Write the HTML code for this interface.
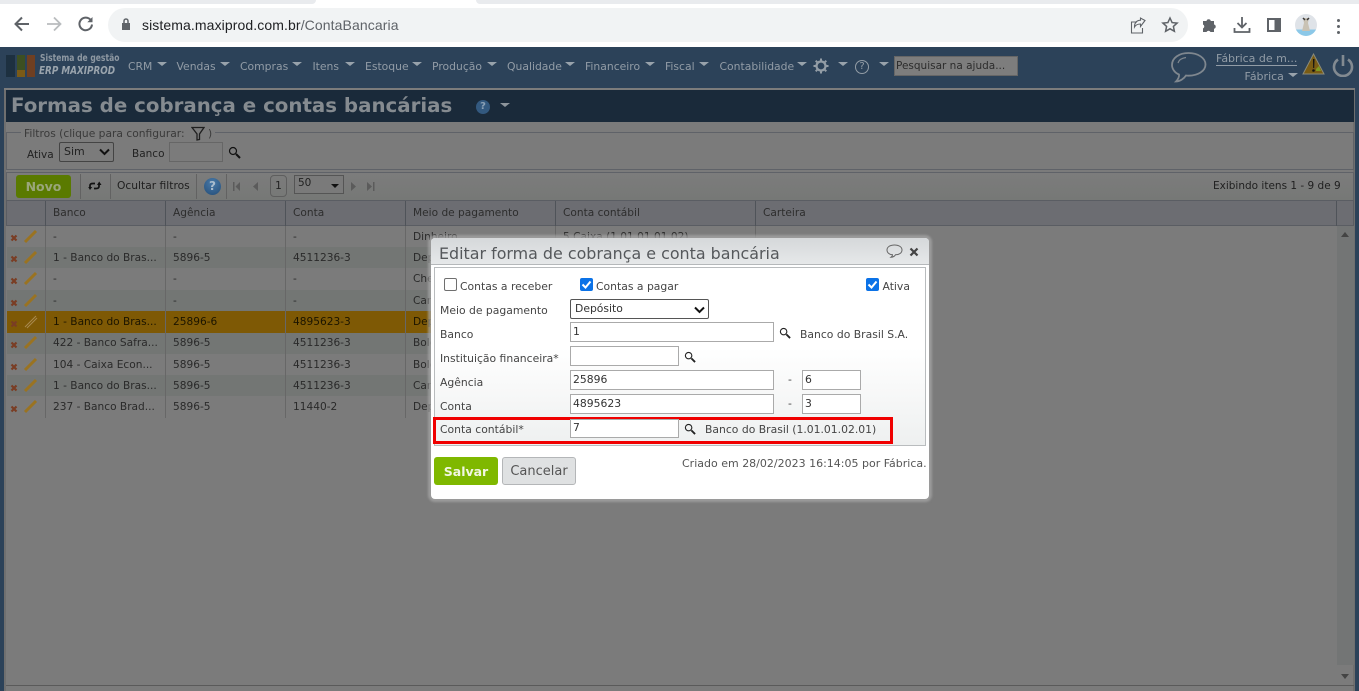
<!DOCTYPE html>
<html><head><meta charset="utf-8">
<style>
html,body{margin:0;padding:0;width:1359px;height:691px;overflow:hidden;background:#2c4259}
*{box-sizing:border-box}
body{font-family:"DejaVu Sans","Liberation Sans",sans-serif;font-size:11px;color:#222;position:relative}
.a{position:absolute;white-space:nowrap}
.m{color:#929ca6;font-size:10.800px;top:60px;line-height:13px}
.tri{position:absolute;width:0;height:0;border-left:5px solid transparent;border-right:5px solid transparent;border-top:4px solid #98a2ab}
.h{position:absolute;top:201px;height:25px;line-height:25px;color:#2d2d2d;font-size:10.600px;padding-left:7px;border-left:1px solid #4f5359}
.c{position:absolute;font-size:10.600px;color:#2a2a2a;line-height:14px;white-space:nowrap}
.vl{position:absolute;width:1px;background:#676767;top:226px;height:192px}
.row{position:absolute;left:7px;width:424px;height:21px}
.d{position:absolute;color:#444;font-size:10.800px;line-height:14px;white-space:nowrap;margin-top:1px}
.inp{position:absolute;height:20px;border:1px solid #aaa;background:#fff;color:#333;font-size:10.800px;line-height:17px;padding-left:2px}
.cb{position:absolute;width:13px;height:13px;border-radius:2px;background:#0b72e7}
.cb svg{position:absolute;left:0;top:0}
</style></head><body>

<!-- Browser chrome -->
<div class="a" style="left:0;top:0;width:1359px;height:47px;background:#fff"></div>
<div class="a" style="left:0;top:0;width:316px;height:4px;background:#e9ebee;border-radius:0 0 6px 0"></div>
<div class="a" style="left:476px;top:0;width:883px;height:4px;background:#e9ebee;border-radius:0 0 0 6px"></div>
<svg class="a" style="left:12px;top:14px" width="20" height="20" viewBox="0 0 20 20" fill="none" stroke="#5f6368" stroke-width="2"><path d="M17 10H4M10 3.500 3.500 10l6.500 6.500"/></svg>
<svg class="a" style="left:44px;top:14px" width="20" height="20" viewBox="0 0 20 20" fill="none" stroke="#b9bcbf" stroke-width="1.800"><path d="M3 10h13M10 3.500 16.500 10 10 16.500"/></svg>
<svg class="a" style="left:76px;top:14px" width="20" height="20" viewBox="0 0 20 20" fill="none" stroke="#5f6368" stroke-width="2"><path d="M16 10.500A6.300 6.300 0 1 1 14.300 5.600"/><path d="M16.500 3v5.200h-5.200z" fill="#5f6368" stroke="none"/></svg>
<div class="a" style="left:108px;top:8px;width:1080px;height:34px;background:#f1f3f4;border-radius:17px"></div>
<svg class="a" style="left:121px;top:17px" width="10" height="14" viewBox="0 0 10 14"><path d="M1 6h8v7H1z" fill="#5f6368"/><path d="M3 6V4a2 2 0 0 1 4 0v2" fill="none" stroke="#5f6368" stroke-width="1.500"/></svg>
<div class="a" style="left:142px;top:17px;font-size:14px;line-height:17px;color:#202124;letter-spacing:.1px;font-family:'Liberation Sans',sans-serif">sistema.maxiprod.com.br<span style="color:#5f6368">/ContaBancaria</span></div>
<svg class="a" style="left:1130px;top:17px" width="18" height="18" viewBox="0 0 18 18" fill="none" stroke="#5f6368" stroke-width="1.100"><path d="M15 3.500 10.500 1v2.200C6 3.500 4.500 6.500 4.500 10c1.500-2.500 3.500-3 6-3v2.500z"/><path d="M7 5H1.500v11h11v-5"/></svg>
<svg class="a" style="left:1161px;top:16px" width="18" height="18" viewBox="0 0 18 18" fill="none" stroke="#5f6368" stroke-width="1.500"><path d="m9 2 2.100 4.600 5 .5-3.700 3.300 1 4.900L9 12.800l-4.400 2.500 1-4.900L1.900 7.100l5-.5z"/></svg>
<svg class="a" style="left:1202px;top:16px" width="16" height="17" viewBox="0 0 16 17"><path d="M1 5h3.500a2.200 2.200 0 0 1 4.300 0H12v3.500a2.200 2.200 0 0 1 0 4.300V16H8.500a2.200 2.200 0 0 0-4 0H1v-3.500a2.200 2.200 0 0 0 0-4z" fill="#5f6368"/></svg>
<svg class="a" style="left:1233px;top:16px" width="18" height="18" viewBox="0 0 18 18" fill="none" stroke="#5f6368" stroke-width="1.800"><path d="M9 1v10M4.500 7 9 11.500 13.500 7M1.500 12v4h15v-4"/></svg>
<div class="a" style="left:1267px;top:18px;width:14px;height:14px;border:2px solid #5f6368;background:linear-gradient(90deg,#fff 0 55%,#5f6368 55%)"></div>
<div class="a" style="left:1295px;top:14px;width:22px;height:22px;border-radius:50%;background:linear-gradient(#dfe3e8 0 70%,#8cc8e8 70%)"></div>
<svg class="a" style="left:1298px;top:15px" width="16" height="19" viewBox="0 0 16 19"><path d="M5 3h6l-1 5 2 8H4l2-8z" fill="#c9c2b4"/><path d="M5 3l2 2M11 3 9 5" stroke="#3a3a3a" stroke-width="1.500"/></svg>
<div class="a" style="left:1337px;top:19px;width:3px;height:3px;border-radius:50%;background:#5f6368;box-shadow:0 6px 0 #5f6368,0 12px 0 #5f6368"></div>

<!-- App header -->
<div class="a" style="left:0;top:47px;width:1359px;height:644px;background:#2c4259"></div>
<div class="a" style="left:6px;top:55px;width:9px;height:22px;background:#1d3040"></div>
<div class="a" style="left:17px;top:55px;width:8px;height:15px;background:#3d4f22"></div>
<div class="a" style="left:17px;top:70px;width:8px;height:7px;background:#7a5a17"></div>
<div class="a" style="left:27px;top:55px;width:8px;height:22px;background:#6f3f22"></div>
<div class="a" style="left:40px;top:53px;color:#8e98a2;font-size:9.500px;line-height:12px;font-weight:bold;transform:scaleX(.8);transform-origin:0 0">Sistema de gestão</div>
<div class="a" style="left:39px;top:65px;color:#9aa4ad;font-size:10.500px;line-height:12px;font-weight:bold;font-style:italic;transform:scaleX(.84);transform-origin:0 0">ERP MAXIPROD</div>

<div class="a m" style="left:128px">CRM</div><div class="tri" style="left:157px;top:62px"></div>
<div class="a m" style="left:176.500px">Vendas</div><div class="tri" style="left:220px;top:62px"></div>
<div class="a m" style="left:240px">Compras</div><div class="tri" style="left:292px;top:62px"></div>
<div class="a m" style="left:312.500px">Itens</div><div class="tri" style="left:345px;top:62px"></div>
<div class="a m" style="left:365px">Estoque</div><div class="tri" style="left:412px;top:62px"></div>
<div class="a m" style="left:432px">Produção</div><div class="tri" style="left:487px;top:62px"></div>
<div class="a m" style="left:507px">Qualidade</div><div class="tri" style="left:565px;top:62px"></div>
<div class="a m" style="left:585px">Financeiro</div><div class="tri" style="left:645px;top:62px"></div>
<div class="a m" style="left:665px">Fiscal</div><div class="tri" style="left:699px;top:62px"></div>
<div class="a m" style="left:719.500px">Contabilidade</div><div class="tri" style="left:797px;top:62px"></div>
<svg class="a" style="left:813px;top:58px" width="16" height="16" viewBox="0 0 16 16"><circle cx="8" cy="8" r="4.500" fill="none" stroke="#939da6" stroke-width="2.200"/><path d="M8 .5v3M8 12.500v3M.5 8h3M12.500 8h3M2.700 2.700l2.100 2.100M11.200 11.200l2.100 2.100M13.300 2.700l-2.100 2.100M4.800 11.200l-2.100 2.100" stroke="#939da6" stroke-width="2"/></svg>
<div class="tri" style="left:838px;top:62px"></div>
<div class="a" style="left:855px;top:60px;width:14px;height:14px;border:1.500px solid #939da6;border-radius:50%;color:#939da6;font-size:10px;line-height:11px;text-align:center">?</div>
<div class="tri" style="left:879px;top:62px"></div>
<div class="a" style="left:894px;top:56px;width:124px;height:20px;background:#7d7d7d;border:1px solid #666;color:#2c2c2c;font-size:10.500px;line-height:18px;padding-left:1px;overflow:hidden">Pesquisar na ajuda...</div>
<svg class="a" style="left:1170px;top:51px" width="37" height="33" viewBox="0 0 37 33" fill="none" stroke="#7f878f" stroke-width="1.800"><path d="M18.500 2C9 2 2 7 2 14c0 4 3 8 7 9.500.5 2-1 5-3 7 4 0 8-3 10-6 1 .2 1.500.2 2.500.2C28 24.700 35.500 20 35.500 13.500 35.500 7 28 2 18.500 2z"/><path d="M8 12c1-3 4-5 8-5.500" stroke-width="1.200"/></svg>
<div class="a" style="left:1216px;top:52px;color:#929ca6;font-size:11px;line-height:14px;border-bottom:1px solid #929ca6;height:14px;width:81px;overflow:visible">Fábrica de m...</div>
<div class="a" style="left:1244.500px;top:70px;color:#929ca6;font-size:11px;line-height:14px">Fábrica</div>
<div class="tri" style="left:1288px;top:73px"></div>
<svg class="a" style="left:1302px;top:53px" width="23" height="22" viewBox="0 0 23 22"><path d="M11.500 1 22 21H1z" fill="#7a5c14" stroke="#8b8b7a"/><path d="M11 6h1.500l-.3 9h-1z" fill="#111"/><circle cx="11.500" cy="17.500" r="1.300" fill="#111"/><path d="M14 16l3-3 2 5h-5z" fill="#7f9a22"/></svg>
<svg class="a" style="left:1332px;top:54px" width="22" height="23" viewBox="0 0 22 23" fill="none" stroke="#828a91" stroke-width="2.600"><path d="M11 1v11"/><path d="M6 5.500a9 9 0 1 0 10 0"/></svg>

<!-- Title bar -->
<div class="a" style="left:4px;top:88px;width:1351px;height:603px;background:#7b7b7b;border:2px solid #6f6f6f;border-bottom:0"></div>
<div class="a" style="left:4px;top:88px;width:1351px;height:2px;background:#7c7c7c"></div>
<div class="a" style="left:6px;top:90px;width:1348px;height:32px;background:#1a2a3a"></div>
<div class="a" style="left:11px;top:94px;font-size:19.800px;line-height:24px;font-weight:bold;color:#858b90">Formas de cobrança e contas bancárias</div>
<div class="a" style="left:476px;top:100px;width:14px;height:14px;border-radius:50%;background:#33597f;color:#8aa0b5;font-size:10px;line-height:14px;text-align:center;font-weight:bold">?</div>
<div class="tri" style="left:500px;top:103px;border-top-color:#8d959c"></div>

<!-- Filter -->
<div class="a" style="left:6px;top:132px;width:1348px;height:38px;border:1px solid #5f6268"></div>
<div class="a" style="left:21px;top:127px;background:#7b7b7b;padding:0 3px;color:#3a3a3a;font-size:10.700px;line-height:13px;width:194px">Filtros (clique para configurar:<span style="position:absolute;left:187px;top:0">)</span></div>
<svg class="a" style="left:191px;top:126px" width="14" height="15" viewBox="0 0 14 15" fill="none" stroke="#1f1f1f" stroke-width="1.300"><path d="M1 1.500h12L8.500 8v5.500L6 14V8z"/></svg>
<div class="a" style="left:27px;top:148px;color:#222;font-size:10.500px;line-height:14px">Ativa</div>
<div class="a" style="left:59px;top:142px;width:55px;height:20px;border:1px solid #444;border-radius:2px;color:#222;font-size:11px;line-height:18px;padding-left:4px;background:#7b7b7b">Sim</div>
<svg class="a" style="left:99px;top:148px" width="11" height="8" viewBox="0 0 11 8" fill="none" stroke="#111" stroke-width="2"><path d="m1 1.500 4.500 4.500L10 1.500"/></svg>
<div class="a" style="left:132px;top:147px;color:#222;font-size:10.500px;line-height:14px">Banco</div>
<div class="a" style="left:169px;top:142px;width:54px;height:20px;border:1px solid #666;background:#7b7b7b"></div>
<svg class="a" style="left:228px;top:146px" width="13" height="13" viewBox="0 0 13 13" fill="none" stroke="#111"><circle cx="5" cy="5" r="3.500" stroke-width="1.200"/><path d="m8 8 4 4" stroke-width="2"/></svg>

<!-- Toolbar -->
<div class="a" style="left:6px;top:172px;width:1348px;height:29px;border:1px solid #5f6268;background:linear-gradient(#7c7c7c,#767876)"></div>
<div class="a" style="left:16px;top:175px;width:55px;height:23px;background:#5a7a00;border-radius:3px;color:#9aa67a;font-size:12.500px;font-weight:bold;line-height:24px;text-align:center">Novo</div>
<div class="a" style="left:80px;top:174px;width:1px;height:25px;background:#626262"></div>
<svg class="a" style="left:88px;top:179px" width="15" height="14" viewBox="0 0 15 14" fill="none" stroke="#111" stroke-width="1.700"><path d="M2 9V6.500C2 5 3 4.500 5 4.500h2M11 5v2.500C11 9 10 9.500 8 9.500H6"/><path d="M.2 8h4L2 11zM9 6h4.500L11.200 2.500z" fill="#111" stroke="none"/></svg>
<div class="a" style="left:110px;top:174px;width:1px;height:25px;background:#626262"></div>
<div class="a" style="left:117px;top:179px;color:#1f1f1f;font-size:10.700px;line-height:14px">Ocultar filtros</div>
<div class="a" style="left:196px;top:174px;width:1px;height:25px;background:#626262"></div>
<div class="a" style="left:204px;top:178px;width:17px;height:17px;border-radius:50%;background:radial-gradient(circle at 50% 30%,#4a7aa8,#234d78);color:#a9bccd;font-size:12px;font-weight:bold;line-height:17px;text-align:center">?</div>
<div class="a" style="left:226px;top:174px;width:1px;height:25px;background:#626262"></div>
<svg class="a" style="left:232px;top:181px" width="30" height="11" viewBox="0 0 30 11" fill="#5b5b5b"><path d="M1 1h1.500v9H1zM8 1v9L3.500 5.500zM26 1v9l-5-4.500z"/></svg>
<svg class="a" style="left:350px;top:181px" width="28" height="11" viewBox="0 0 28 11" fill="#5b5b5b"><path d="M1 1v9l5-4.500zM17 1v9l5-4.500zM23 1h1.500v9H23z"/></svg>
<div class="a" style="left:270px;top:175px;width:17px;height:22px;border:1px solid #5e5e5e;border-radius:4px;color:#222;font-size:10.500px;line-height:20px;text-align:center">1</div>
<div class="a" style="left:294px;top:175px;width:50px;height:19px;border:1px solid #555;background:#7a7a7a;color:#222;font-size:10.500px;line-height:15px;padding-left:3px">50</div>
<div class="a" style="left:331px;top:184px;border-left:4px solid transparent;border-right:4px solid transparent;border-top:4px solid #111"></div>
<div class="a" style="left:1213px;top:179px;color:#1f1f1f;font-size:10.500px;line-height:14px">Exibindo itens 1 - 9 de 9</div>

<!-- Grid -->
<div class="a" style="left:6px;top:200px;width:1348px;height:26px;background:#6c6d72;border:1px solid #5a5d63"></div>
<div class="h" style="left:45px;width:120px">Banco</div>
<div class="h" style="left:165px;width:120px">Agência</div>
<div class="h" style="left:285px;width:120px">Conta</div>
<div class="h" style="left:405px;width:150px">Meio de pagamento</div>
<div class="h" style="left:555px;width:200px">Conta contábil</div>
<div class="h" style="left:755px;width:582px">Carteira</div>
<div class="h" style="left:1336px;width:18px"></div>

<div class="row" style="top:247px;background:#737674"></div>
<div class="row" style="top:290px;background:#737674"></div>
<div class="row" style="top:311px;height:22px;background:#7e5905"></div>
<div class="row" style="top:333px;background:#737674"></div>
<div class="row" style="top:375px;background:#737674"></div>
<div class="a" style="left:1337px;top:226px;width:17px;height:439px;background:#737575"></div>
<div class="a" style="left:1341px;top:232px;border-left:4px solid transparent;border-right:4px solid transparent;border-bottom:5px solid #444"></div>
<div class="a" style="left:1341px;top:674px;border-left:4px solid transparent;border-right:4px solid transparent;border-top:5px solid #444"></div>
<div class="a" style="left:6px;top:685px;width:1348px;height:1px;background:#5a5a5a"></div>
<div class="vl" style="left:45px"></div><div class="vl" style="left:165px"></div><div class="vl" style="left:285px"></div><div class="vl" style="left:405px"></div><div class="vl" style="left:555px;height:12px"></div><div class="vl" style="left:755px;height:12px"></div>

<svg class="a" style="left:8px;top:228px" width="32" height="190" viewBox="0 0 32 190" fill="none">
<g stroke="#7a3d24" stroke-width="2.200">
<path d="M3.500 7.500l5 5M8.500 7.500l-5 5"/><path d="M3.500 28.500l5 5M8.500 28.500l-5 5"/><path d="M3.500 50.500l5 5M8.500 50.500l-5 5"/><path d="M3.500 72.500l5 5M8.500 72.500l-5 5"/><path d="M3.500 93.500l5 5M8.500 93.500l-5 5"/><path d="M3.500 114.500l5 5M8.500 114.500l-5 5"/><path d="M3.500 136.500l5 5M8.500 136.500l-5 5"/><path d="M3.500 157.500l5 5M8.500 157.500l-5 5"/><path d="M3.500 178.500l5 5M8.500 178.500l-5 5"/>
</g>
<g stroke="#9a7321" stroke-width="3">
<path d="M17 14 28 3"/><path d="M17 35 28 24"/><path d="M17 56 28 45"/><path d="M17 78 28 67"/><path d="M17 120 28 109"/><path d="M17 142 28 131"/><path d="M17 163 28 152"/><path d="M17 184 28 173"/>
</g>
<path d="M17 99 28 88M19 100 29 90" stroke="#a88a50" stroke-width="1"/>
</svg>

<div class="c" style="left:53px;top:230px">-</div><div class="c" style="left:173px;top:230px">-</div><div class="c" style="left:293px;top:230px">-</div><div class="c" style="left:413px;top:230px">Dinheiro</div><div class="c" style="left:563px;top:230px">5 Caixa (1.01.01.01.02)</div>
<div class="c" style="left:53px;top:251px">1 - Banco do Bras...</div><div class="c" style="left:173px;top:251px">5896-5</div><div class="c" style="left:293px;top:251px">4511236-3</div><div class="c" style="left:413px;top:251px">Depósito</div>
<div class="c" style="left:53px;top:272px">-</div><div class="c" style="left:173px;top:272px">-</div><div class="c" style="left:293px;top:272px">-</div><div class="c" style="left:413px;top:272px">Cheque</div>
<div class="c" style="left:53px;top:294px">-</div><div class="c" style="left:173px;top:294px">-</div><div class="c" style="left:293px;top:294px">-</div><div class="c" style="left:413px;top:294px">Cartão</div>
<div class="c" style="left:53px;top:315px;color:#1c1500">1 - Banco do Bras...</div><div class="c" style="left:173px;top:315px;color:#1c1500">25896-6</div><div class="c" style="left:293px;top:315px;color:#1c1500">4895623-3</div><div class="c" style="left:413px;top:315px;color:#1c1500">Depósito</div>
<div class="c" style="left:53px;top:336px">422 - Banco Safra...</div><div class="c" style="left:173px;top:336px">5896-5</div><div class="c" style="left:293px;top:336px">4511236-3</div><div class="c" style="left:413px;top:336px">Boleto</div>
<div class="c" style="left:53px;top:358px">104 - Caixa Econ...</div><div class="c" style="left:173px;top:358px">5896-5</div><div class="c" style="left:293px;top:358px">4511236-3</div><div class="c" style="left:413px;top:358px">Boleto</div>
<div class="c" style="left:53px;top:379px">1 - Banco do Bras...</div><div class="c" style="left:173px;top:379px">5896-5</div><div class="c" style="left:293px;top:379px">4511236-3</div><div class="c" style="left:413px;top:379px">Cartão</div>
<div class="c" style="left:53px;top:400px">237 - Banco Brad...</div><div class="c" style="left:173px;top:400px">5896-5</div><div class="c" style="left:293px;top:400px">11440-2</div><div class="c" style="left:413px;top:400px">Depósito</div>

<!-- Dialog -->
<div class="a" style="left:431px;top:238px;width:498px;height:261px;background:#fff;border-radius:4px;box-shadow:0 0 2px 3px rgba(165,165,165,.75)">
  <div class="a" style="left:0;top:0;width:498px;height:26px;background:linear-gradient(#d5d8da,#e6e8e9);border-radius:4px 4px 0 0"></div>
  <div class="a" style="left:0;top:26px;width:498px;height:1px;background:#b5b8ba"></div>
  <div class="a" style="left:8px;top:5px;font-size:15.900px;line-height:21px;color:#55585b">Editar forma de cobrança e conta bancária</div>
  <svg class="a" style="left:455px;top:6px" width="17" height="14" viewBox="0 0 17 14" fill="none" stroke="#666" stroke-width="1"><path d="M8.500 1C4 1 1 3 1 6s3 4.800 5.500 4.800c0 1-.5 1.700-1.500 2.400 2 0 3.500-1 4.500-2.400C13 10.800 16 9 16 6s-3-5-7.500-5z"/></svg>
  <svg class="a" style="left:478px;top:9px" width="10" height="10" viewBox="0 0 10 10" stroke="#444" stroke-width="2.200"><path d="m1.500 1.500 7 7M8.500 1.500l-7 7"/></svg>
  <div class="a" style="left:3px;top:29px;width:492px;height:179px;border:1px solid #b9bcbe;background:linear-gradient(#fff 0,#fff 45%,#eef0f0 100%)"></div>
</div>

<div class="a" style="left:444px;top:278px;width:13px;height:13px;border:1px solid #6f6f6f;border-radius:2px;background:#fff"></div>
<div class="d" style="left:460px;top:279px">Contas a receber</div>
<div class="cb" style="left:580px;top:278px"><svg width="13" height="13" viewBox="0 0 13 13" fill="none" stroke="#fff" stroke-width="2"><path d="m2.500 6.500 3 3 5-6"/></svg></div>
<div class="d" style="left:596px;top:279px">Contas a pagar</div>
<div class="cb" style="left:866px;top:278px"><svg width="13" height="13" viewBox="0 0 13 13" fill="none" stroke="#fff" stroke-width="2"><path d="m2.500 6.500 3 3 5-6"/></svg></div>
<div class="d" style="left:882.500px;top:279px">Ativa</div>

<div class="d" style="left:440px;top:303px">Meio de pagamento</div>
<div class="a" style="left:570px;top:299px;width:139px;height:20px;border:1px solid #555;border-radius:2px;background:#fff;color:#333;font-size:10.800px;line-height:18px;padding-left:4px">Depósito</div>
<svg class="a" style="left:694px;top:306px" width="11" height="8" viewBox="0 0 11 8" fill="none" stroke="#111" stroke-width="2"><path d="m1 1.500 4.500 4.500L10 1.500"/></svg>

<div class="d" style="left:440px;top:327px">Banco</div>
<div class="inp" style="left:570px;top:322px;width:204px">1</div>
<svg class="a" style="left:779px;top:327px" width="12" height="12" viewBox="0 0 13 13" fill="none" stroke="#222"><circle cx="5" cy="5" r="3.500" stroke-width="1.200"/><path d="m8 8 4 4" stroke-width="2"/></svg>
<div class="d" style="left:800px;top:327px">Banco do Brasil S.A.</div>

<div class="d" style="left:440px;top:351px">Instituição financeira*</div>
<div class="inp" style="left:570px;top:346px;width:109px"></div>
<svg class="a" style="left:684px;top:351px" width="12" height="12" viewBox="0 0 13 13" fill="none" stroke="#222"><circle cx="5" cy="5" r="3.500" stroke-width="1.200"/><path d="m8 8 4 4" stroke-width="2"/></svg>

<div class="d" style="left:440px;top:375px">Agência</div>
<div class="inp" style="left:570px;top:370px;width:204px">25896</div>
<div class="d" style="left:788px;top:372px">-</div>
<div class="inp" style="left:802px;top:370px;width:59px">6</div>

<div class="d" style="left:440px;top:399px">Conta</div>
<div class="inp" style="left:570px;top:394px;width:204px">4895623</div>
<div class="d" style="left:788px;top:396px">-</div>
<div class="inp" style="left:802px;top:394px;width:59px">3</div>

<div class="a" style="left:433px;top:417px;width:460px;height:27px;border:3px solid #f00000"></div>
<div class="d" style="left:440px;top:422px">Conta contábil*</div>
<div class="inp" style="left:570px;top:419px;width:109px;height:19px;line-height:16px">7</div>
<svg class="a" style="left:684px;top:423px" width="12" height="12" viewBox="0 0 13 13" fill="none" stroke="#222"><circle cx="5" cy="5" r="3.500" stroke-width="1.200"/><path d="m8 8 4 4" stroke-width="2"/></svg>
<div class="d" style="left:705px;top:422px">Banco do Brasil (1.01.01.02.01)</div>

<div class="a" style="left:434px;top:457px;width:64px;height:28px;background:#7fb800;border-radius:3px;color:#f2f7e2;font-size:12.500px;font-weight:bold;line-height:29px;text-align:center">Salvar</div>
<div class="a" style="left:502px;top:457px;width:74px;height:28px;background:#dfe1e2;border:1px solid #b4b6b8;border-radius:3px;color:#555;font-size:13px;line-height:28px;text-align:center">Cancelar</div>
<div class="d" style="left:682px;top:456px;color:#555;font-size:11px">Criado em 28/02/2023 16:14:05 por Fábrica.</div>

</body></html>
